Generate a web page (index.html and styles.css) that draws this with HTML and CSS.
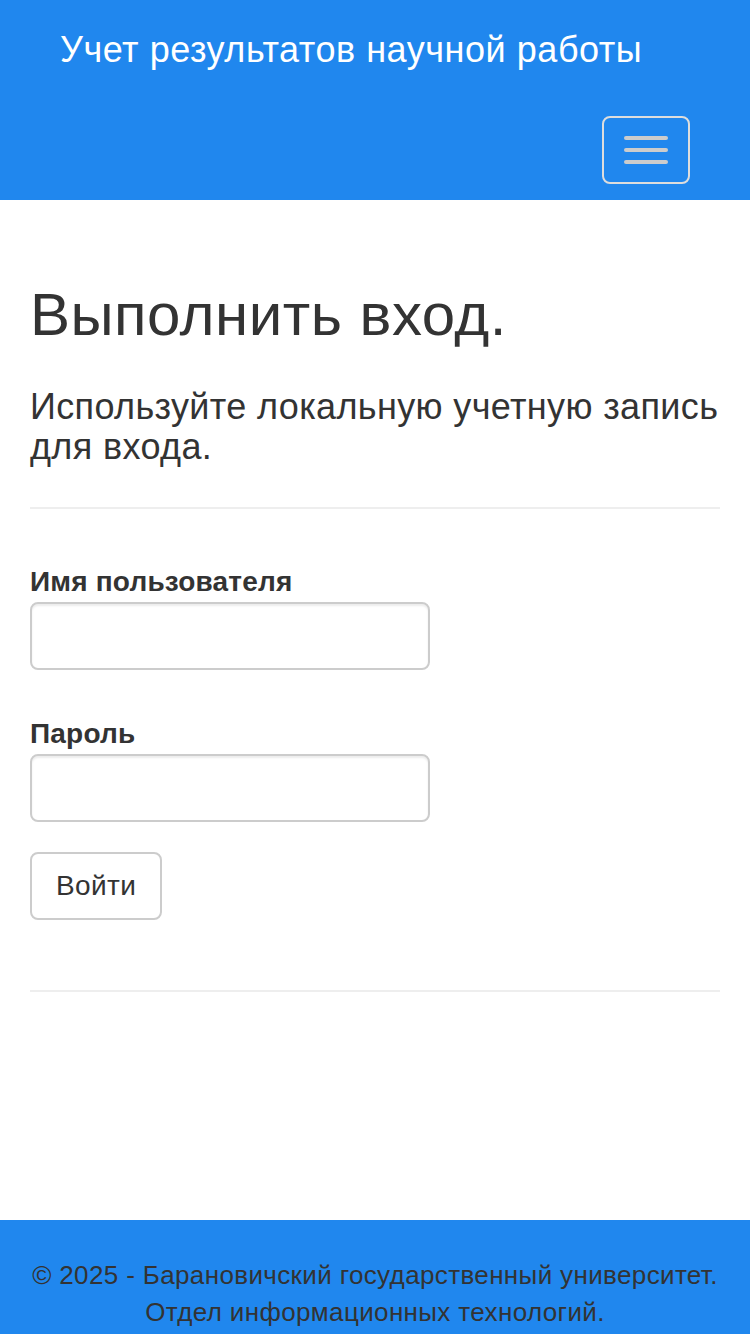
FILE: index.html
```html
<!DOCTYPE html>
<html lang="ru">
<head>
    <meta charset="UTF-8">
    <meta name="viewport" content="width=device-width, initial-scale=1.0">
    <title>Выполнить вход - Учет результатов научной работы</title>
    <link rel="stylesheet" href="styles.css">
</head>
<body>
    <header class="navbar">
        <a class="navbar-brand" href="#">Учет результатов научной работы</a>
        <div class="navbar-toggle-row">
            <button type="button" class="navbar-toggle" aria-label="Меню">
                <span class="icon-bar"></span>
                <span class="icon-bar"></span>
                <span class="icon-bar"></span>
            </button>
        </div>
    </header>

    <main class="container">
        <h2 class="page-title">Выполнить вход.</h2>
        <section class="login-section">
            <h4 class="login-subtitle">Используйте локальную учетную запись для входа.</h4>
            <hr class="divider first">
            <form id="loginForm">
                <div class="form-group">
                    <label for="userName">Имя пользователя</label>
                    <input type="text" id="userName" name="userName" class="form-control">
                </div>
                <div class="form-group">
                    <label for="password">Пароль</label>
                    <input type="password" id="password" name="password" class="form-control">
                </div>
                <button type="submit" class="btn">Войти</button>
            </form>
        </section>
        <hr class="divider last">
    </main>

    <footer class="footer">
        <p>© 2025 - Барановичский государственный университет.<br>Отдел информационных технологий.</p>
    </footer>
</body>
</html>
```

FILE: styles.css
```css
body {
    font-family: "Liberation Sans", Arial, sans-serif;
    font-size: 28px;
    line-height: 40px;
    letter-spacing: 0.013em;
    color: #333;
    margin: 0;
    padding: 0;
    background-color: #fff;
}

.navbar {
    background-color: #2087ee;
    height: 200px;
}

.navbar-brand {
    display: block;
    padding: 30px 60px;
    font-size: 36px;
    line-height: 40px;
    letter-spacing: 0.015em;
    color: #fff;
    text-decoration: none;
}

.navbar-toggle-row {
    display: flex;
    justify-content: flex-end;
    padding: 16px 60px 16px 0;
}

.navbar-toggle {
    display: flex;
    flex-direction: column;
    gap: 8px;
    padding: 18px 20px;
    background: transparent;
    border: 2px solid #ddd;
    border-radius: 8px;
    cursor: pointer;
}

.icon-bar {
    display: block;
    width: 44px;
    height: 4px;
    border-radius: 2px;
    background-color: #ccc;
}

.container {
    padding: 0 30px;
    margin-bottom: 228px;
}

.page-title {
    font-size: 60px;
    line-height: 66px;
    font-weight: 500;
    letter-spacing: 0.008em;
    margin: 82px 0 0;
}

.login-subtitle {
    font-size: 36px;
    line-height: 39.6px;
    font-weight: 500;
    margin: 39px 0 0;
}

.divider {
    height: 0;
    margin: 0;
    border: 0;
    border-top: 2px solid #eee;
}

.divider.first {
    margin-top: 41px;
}

.divider.last {
    margin-top: 70px;
}

#loginForm {
    padding-top: 53px;
}

.form-group {
    margin-bottom: 44px;
}

.form-group:last-of-type {
    margin-bottom: 30px;
}

.form-group label {
    display: block;
    font-weight: bold;
    line-height: 40px;
    letter-spacing: 0.007em;
}

.form-control {
    display: block;
    width: 400px;
    height: 68px;
    padding: 12px 24px;
    font-family: inherit;
    font-size: 28px;
    color: #555;
    border: 2px solid #ccc;
    border-radius: 8px;
    box-shadow: inset 0 2px 2px rgba(0, 0, 0, 0.075);
    box-sizing: border-box;
    outline: none;
}

.btn {
    display: block;
    height: 68px;
    padding: 12px 24px;
    font-family: inherit;
    font-size: 28px;
    line-height: 40px;
    letter-spacing: inherit;
    color: #333;
    background-color: #fff;
    border: 2px solid #ccc;
    border-radius: 8px;
    box-sizing: border-box;
    cursor: pointer;
}

.btn:hover {
    background-color: #e6e6e6;
}

.footer {
    background-color: #2087ee;
    padding: 37px 30px 20px;
    text-align: center;
}

.footer p {
    margin: 0;
    font-size: 26px;
    line-height: 37px;
}
```
